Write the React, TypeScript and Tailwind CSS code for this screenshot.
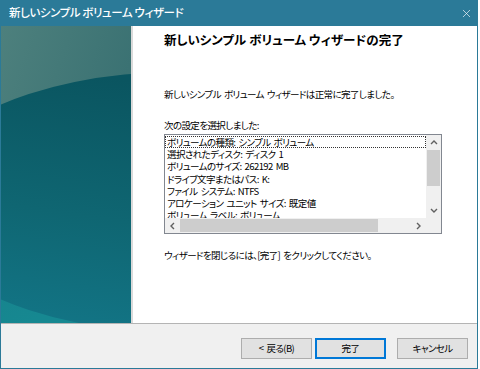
import { X } from "lucide-react";

const items = [
  "ボリュームの種類: シンプル ボリューム",
  "選択されたディスク: ディスク 1",
  "ボリュームのサイズ: 262192 MB",
  "ドライブ文字またはパス: K:",
  "ファイル システム: NTFS",
  "アロケーション ユニット サイズ: 既定値",
  "ボリューム ラベル: ボリューム",
  "クイック フォーマット: はい",
];

const font = "font-['Noto_Sans_CJK_JP','Noto_Sans',sans-serif] [font-feature-settings:'palt']";
const body = "text-[9.5px] tracking-[-0.6px] [word-spacing:1.5px]";

function SidePanel() {
  return (
    <svg width="130" height="297" viewBox="0 0 130 297" className="block">
      <defs>
        <linearGradient id="top" x1="0" y1="0" x2="1" y2="0.3">
          <stop offset="0" stopColor="#4d807d" />
          <stop offset="1" stopColor="#3b7273" />
        </linearGradient>
        <linearGradient id="bg" x1="0" y1="0" x2="0.2" y2="1">
          <stop offset="0" stopColor="#1b6f7a" />
          <stop offset="1" stopColor="#168891" />
        </linearGradient>
        <linearGradient id="ell" x1="0.3" y1="0" x2="0" y2="1">
          <stop offset="0" stopColor="#0a5560" />
          <stop offset="0.5" stopColor="#0f6672" />
          <stop offset="1" stopColor="#13788a" />
        </linearGradient>
      </defs>
      <rect width="130" height="297" fill="url(#bg)" />
      <rect width="130" height="120" fill="url(#top)" />
      <ellipse cx="175" cy="176" rx="265" ry="130" fill="url(#ell)" />
    </svg>
  );
}

function Chevron({ dir }: { dir: "up" | "down" | "left" | "right" }) {
  const d = {
    up: "M1 5 L4 2 L7 5",
    down: "M1 2 L4 5 L7 2",
    left: "M5 1 L2 4 L5 7",
    right: "M2 1 L5 4 L2 7",
  }[dir];
  return (
    <svg width="8" height="8" viewBox="0 0 8 8">
      <path d={d} fill="none" stroke="#606060" strokeWidth="1.4" />
    </svg>
  );
}

function ListBox() {
  return (
    <div className="w-[278px] h-[100px] border border-[#828790] bg-white grid grid-cols-[1fr_15px] grid-rows-[1fr_15px]">
      <div className={`overflow-hidden pt-px leading-[12.2px] text-black ${body}`}>
        {items.map((t, i) => (
          <div
            key={i}
            className={`whitespace-nowrap pl-[2px] ${i === 0 ? "outline outline-1 outline-dotted outline-[#333] -outline-offset-1" : ""}`}
          >
            {t}
          </div>
        ))}
      </div>
      <div className="bg-[#f0f0f0] flex flex-col">
        <div className="h-[15px] flex items-center justify-center">
          <Chevron dir="up" />
        </div>
        <div className="mx-[1px] h-[36px] bg-[#cdcdcd]" />
        <div className="flex-1" />
        <div className="h-[15px] flex items-center justify-center">
          <Chevron dir="down" />
        </div>
      </div>
      <div className="bg-[#f0f0f0] flex">
        <div className="w-[15px] flex items-center justify-center">
          <Chevron dir="left" />
        </div>
        <div className="my-[1px] w-[198px] bg-[#cdcdcd]" />
        <div className="flex-1" />
        <div className="w-[15px] flex items-center justify-center">
          <Chevron dir="right" />
        </div>
      </div>
      <div className="bg-[#f0f0f0]" />
    </div>
  );
}

function Button({ label, primary }: { label: string; primary?: boolean }) {
  return (
    <button
      className={`h-[21px] w-[71px] bg-[#e1e1e1] text-black flex items-center justify-center ${body} ${
        primary ? "border-2 border-[#0078d7]" : "border border-[#adadad]"
      }`}
    >
      {label}
    </button>
  );
}

export default function App() {
  return (
    <div className={`w-[480px] h-[369px] bg-white ${font}`}>
      <div className="w-[478px] h-[369px] border-x border-b border-[#2b7a98] flex flex-col">
        <div className="h-[26px] -mx-px bg-[#2b7a98] flex items-center justify-between pl-[9px] pr-[5px] text-white">
          <span className="text-[11.5px] tracking-[-0.4px] font-medium">新しいシンプル ボリューム ウィザード</span>
          <X className="w-[13px] h-[13px]" strokeWidth={1.2} />
        </div>
        <div className="h-[297px] flex">
          <SidePanel />
          <div className="w-[2px] bg-[#dadada]" />
          <div className="flex-1 pl-[31px] pt-[6px] text-black">
            <h1 className="text-[12.5px] font-bold leading-[16px]">新しいシンプル ボリューム ウィザードの完了</h1>
            <p className={`mt-[39px] leading-[14px] ${body}`}>新しいシンプル ボリューム ウィザードは正常に完了しました。</p>
            <p className={`mt-[17px] leading-[14px] ${body}`}>次の設定を選択しました:</p>
            <div className="mt-[2px]">
              <ListBox />
            </div>
            <p className={`mt-[14px] leading-[14px] ${body}`}>ウィザードを閉じるには、[完了] をクリックしてください。</p>
          </div>
        </div>
        <div className="h-px bg-[#b4b4b4]" />
        <div className="flex-1 bg-[#f0f0f0] flex justify-end items-start pt-[14px] pr-[9px]">
          <Button label="< 戻る(B)" />
          <div className="w-[3px]" />
          <Button label="完了" primary />
          <div className="w-[11px]" />
          <Button label="キャンセル" />
        </div>
      </div>
    </div>
  );
}
